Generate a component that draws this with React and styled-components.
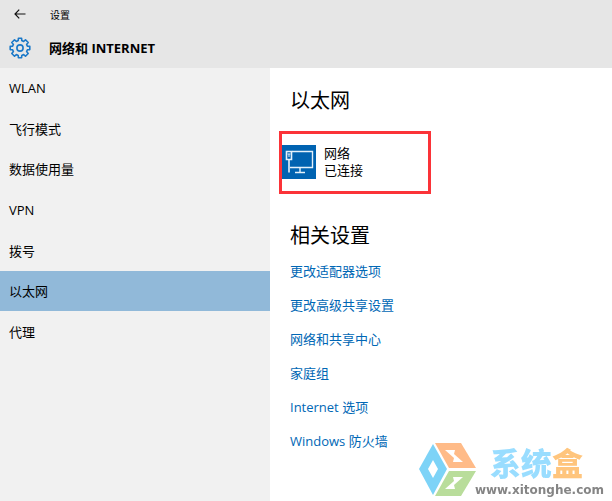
import React, { useState } from "react";
import styled, { createGlobalStyle } from "styled-components";

const GlobalStyle = createGlobalStyle`
  body {
    margin: 0;
    background-color: #ffffff;
    color: #000000;
    font-family: "Open Sans", "Noto Sans CJK SC", sans-serif;
    font-size: 13px;
  }
  button {
    font: inherit;
    color: inherit;
    border: none;
    background: none;
    padding: 0;
    cursor: pointer;
  }
`;

const Page = styled.div`
  display: flex;
  flex-direction: column;
  min-height: 100vh;
`;

const Header = styled.header`
  background-color: #e6e6e6;
`;

const TitleBar = styled.div`
  display: flex;
  align-items: center;
  height: 28px;
  padding-left: 10px;
  gap: 20px;
  font-size: 10px;
`;

const BackButton = styled.button`
  display: flex;
  justify-content: center;
  width: 20px;
`;

const Heading = styled.div`
  display: flex;
  align-items: center;
  height: 40px;
  padding-left: 9px;
  gap: 18px;
  h1 {
    margin: 0;
    font-size: 13px;
    line-height: 20px;
    font-weight: 700;
  }
`;

const Body = styled.div`
  display: flex;
  flex: 1;
`;

const Sidebar = styled.nav`
  flex: 0 0 270px;
  background-color: #f1f1f1;
`;

const Menu = styled.ul`
  display: grid;
  grid-template-rows: repeat(7, 1fr);
  height: 284px;
  list-style: none;
  margin: 0;
  padding: 0;
`;

const MenuButton = styled.button`
  width: 100%;
  height: 100%;
  && {
    padding: 0 9px;
    background-color: ${({ $active }) => ($active ? "#91b9d9" : "transparent")};
  }
  text-align: left;
  line-height: 20px;
`;

const Content = styled.main`
  display: flex;
  flex-direction: column;
  align-items: flex-start;
  flex: 1;
  padding: 19px 20px 0;
`;

const SectionTitle = styled.h2`
  margin: 0;
  font-size: 20px;
  line-height: 28px;
  font-weight: 400;
`;

const Connection = styled.button`
  display: flex;
  align-items: center;
  gap: 8px;
  width: 152px;
  height: 63px;
  margin: 16px 0 28px -11px;
  && {
    border: 3px solid #fb3338;
    padding-bottom: 2px;
  }
  text-align: left;
  line-height: 17px;
  span {
    display: block;
  }
`;

const Links = styled.div`
  display: flex;
  flex-direction: column;
  align-items: flex-start;
  gap: 14px;
  margin-top: 11px;
`;

const SettingLink = styled.a`
  color: #0067b5;
  line-height: 20px;
  text-decoration: none;
  &:hover {
    color: #666666;
  }
`;

const Watermark = styled.div`
  position: fixed;
  right: 8px;
  bottom: 4px;
  display: flex;
  align-items: center;
`;

const Brand = styled.div`
  display: flex;
  flex-direction: column;
  margin-left: -2px;
`;

const BrandName = styled.div`
  padding-left: 15px;
  font-family: "Noto Sans CJK SC", sans-serif;
  font-size: 31px;
  font-weight: 900;
  line-height: 42px;
  color: #99ddff;
  span {
    color: #ffc57d;
  }
`;

const BrandUrl = styled.div`
  font-family: "DejaVu Sans", sans-serif;
  font-size: 12px;
  font-weight: 700;
  line-height: 14px;
  color: #858585;
`;

const BackIcon = () => (
  <svg width="12" height="10" viewBox="0 0 12 10" fill="none" stroke="#111" strokeWidth="1.2">
    <path d="M5.2 .7 1 5l4.2 4.3M1 5h10.5" />
  </svg>
);

const GearIcon = () => (
  <svg width="22" height="22" viewBox="0 0 22 22" fill="none" stroke="#1a78c8" strokeWidth="1.6">
    <path
      strokeLinejoin="round"
      d="M9.2 3.6 9.4 1.2h3.2l.2 2.4 1.8.8 1.9-1.6 2.7 2.7-1.6 1.9.8 1.8 2.4.2v3.2l-2.4.2-.8 1.8 1.6 1.9-2.7 2.7-1.9-1.6-1.8.8-.2 2.4H9.4l-.2-2.4-1.8-.8-1.9 1.6-2.7-2.7 1.6-1.9-.8-1.8-2.4-.2V9.4l2.4-.2.8-1.8-1.6-1.9 2.7-2.7 1.9 1.6z"
    />
    <circle cx="11" cy="11" r="3.1" />
  </svg>
);

const EthernetIcon = () => (
  <svg width="34" height="34" viewBox="0 0 34 34" fill="none" stroke="#e4f1fb">
    <path d="M0 0h34v34H0z" fill="#0063b1" stroke="none" />
    <path d="M10 6.5h20.5v16H8M18 22.5v4.5M13 27.5h10" strokeWidth="1.4" />
    <path d="M4.5 6.5h5v8h-5zM7 15v12.5" strokeWidth="1.6" />
    <path d="M5.5 9h3M7 9v3" />
  </svg>
);

const BrandLogo = () => (
  <svg width="58" height="53" viewBox="0 0 58 53">
    <path fill="#7dd3f7" d="M14 1 28 26 14 52 0 26z" />
    <path fill="#ffbb88" d="M16 0h26l15 25H30z" />
    <path fill="#b9dd9b" d="M30 28h27L42 53H16z" />
    <path fill="#fff" d="m14 17 5 9-5 9-5-9zM26 7h10l-1 4 9 8H34l1-4zM44 34l-9 8 1 4H26l9-8-1-4z" />
  </svg>
);

const menuItems = ["WLAN", "飞行模式", "数据使用量", "VPN", "拨号", "以太网", "代理"];

const links = [
  "更改适配器选项",
  "更改高级共享设置",
  "网络和共享中心",
  "家庭组",
  "Internet 选项",
  "Windows 防火墙",
];

const App = () => {
  const [active, setActive] = useState("以太网");
  return (
    <Page>
      <GlobalStyle />
      <Header>
        <TitleBar>
          <BackButton aria-label="返回">
            <BackIcon />
          </BackButton>
          <span>设置</span>
        </TitleBar>
        <Heading>
          <GearIcon />
          <h1>网络和 INTERNET</h1>
        </Heading>
      </Header>
      <Body>
        <Sidebar>
          <Menu>
            {menuItems.map((item) => (
              <li key={item}>
                <MenuButton $active={item === active} onClick={() => setActive(item)}>
                  {item}
                </MenuButton>
              </li>
            ))}
          </Menu>
        </Sidebar>
        <Content>
          <SectionTitle>以太网</SectionTitle>
          <Connection>
            <EthernetIcon />
            <div>
              <span>网络</span>
              <span>已连接</span>
            </div>
          </Connection>
          <SectionTitle>相关设置</SectionTitle>
          <Links>
            {links.map((link) => (
              <SettingLink key={link} href="#">
                {link}
              </SettingLink>
            ))}
          </Links>
        </Content>
      </Body>
      <Watermark>
        <BrandLogo />
        <Brand>
          <BrandName>
            系统<span>盒</span>
          </BrandName>
          <BrandUrl>www.xitonghe.com</BrandUrl>
        </Brand>
      </Watermark>
    </Page>
  );
};

export default App;
